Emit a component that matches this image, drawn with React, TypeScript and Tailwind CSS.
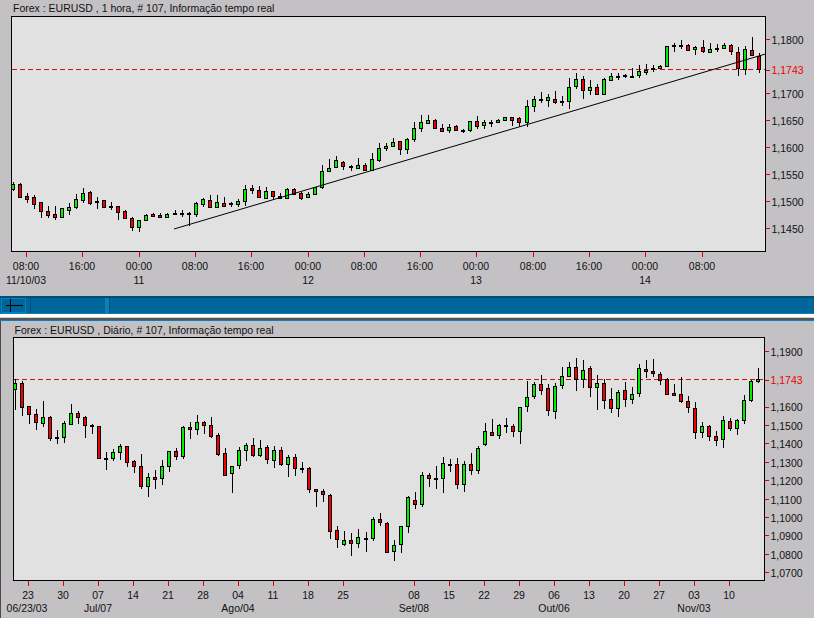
import React from "react";

type C = [number, number, number, number, number];

// hi, bodyTop, bodyBottom, lo, green flag (values measured at 3x)
const hourly: C[] = [
  [547,553,566,572,1],[550,552,590,593,0],[580,588,596,608,0],[586,592,611,626,0],[606,607,632,653,0],[618,634,644,653,0],[618,643,650,659,0],[624,625,650,653,1],[610,622,629,644,1],[583,598,620,626,1],
  [564,580,599,608,1],[574,577,608,614,0],[591,603,607,626,0],[600,601,620,623,0],[607,618,620,629,0],[618,619,635,659,0],[631,634,655,656,0],[652,655,682,692,0],[660,661,682,695,1],[643,646,661,664,1],
  [640,643,647,648,0],[640,644,650,653,0],[640,641,650,653,1],[630,639,641,644,0],[630,640,643,650,0],[637,640,643,677,0],[607,610,643,650,1],[595,598,613,620,1],[586,601,620,625,0],[586,607,620,623,1],
  [590,610,617,618,0],[607,610,613,620,0],[598,604,611,620,1],[556,568,604,617,1],[555,565,571,581,0],[559,571,592,593,0],[562,574,595,598,1],[573,574,587,600,0],[580,587,593,598,0],[565,568,593,598,1],
  [565,566,581,586,0],[576,580,593,599,0],[575,583,590,593,1],[560,562,583,586,1],[495,514,562,566,1],[477,503,512,515,1],[468,481,502,503,1],[484,485,499,509,0],[495,499,502,512,0],[474,496,503,506,1],
  [490,496,509,512,0],[460,478,509,512,1],[430,445,481,485,1],[430,439,445,452,1],[414,427,439,442,1],[424,424,448,464,0],[415,418,448,461,1],[367,385,418,425,1],[345,367,385,395,1],[346,361,370,372,1],
  [358,361,385,388,0],[373,385,392,395,0],[373,381,391,398,1],[376,379,389,392,0],[388,391,394,398,0],[364,364,391,395,1],[348,364,379,388,0],[360,367,376,386,1],[361,365,367,380,0],[358,361,367,368,1],
  [352,352,361,362,1],[351,352,359,377,0],[351,355,367,380,0],[300,319,367,380,1],[289,298,319,335,1],[277,297,301,310,0],[283,292,301,320,1],[273,296,307,311,0],[289,304,307,317,0],[235,260,304,326,1],
  [220,236,259,268,1],[229,236,271,296,0],[240,262,271,284,1],[253,262,283,285,0],[235,238,283,284,1],[220,229,241,243,1],[220,229,232,241,0],[222,226,229,235,0],[205,227,229,230,0],[195,214,226,235,1],
  [192,210,217,226,1],[196,205,207,217,0],[196,199,205,206,1],[139,139,199,199,1],[130,136,139,157,0],[121,136,139,148,0],[133,136,151,152,0],[139,140,148,164,1],[121,142,154,160,0],[130,146,157,160,1],
  [133,145,147,157,0],[130,136,145,148,1],[133,136,154,166,0],[140,155,205,227,0],[139,148,207,224,1],[111,151,166,168,0],[160,167,208,218,0],
];

const daily: C[] = [
  [298,310,328,390,1],[304,310,380,408,0],[377,379,403,432,0],[388,403,427,450,0],[364,412,428,441,1],[409,412,475,483,0],[450,472,475,492,0],[424,430,472,489,1],[373,400,431,435,1],[393,400,412,432,0],
  [409,411,436,474,0],[433,436,439,462,0],[438,439,535,536,0],[517,534,536,570,0],[508,517,535,543,1],[492,499,517,541,1],[497,498,547,560,0],[541,544,559,579,0],[522,559,617,626,0],[578,592,617,651,1],
  [571,592,598,627,0],[541,559,595,615,1],[512,514,559,576,1],[505,514,529,540,0],[439,441,529,536,1],[427,442,448,476,0],[406,427,448,465,1],[424,427,436,462,0],[412,436,467,473,0],[460,466,521,527,0],
  [505,520,584,587,0],[558,559,580,638,1],[502,511,556,567,1],[490,496,511,543,1],[475,496,526,530,0],[480,505,526,532,1],[496,502,538,552,0],[498,511,541,564,1],[502,511,553,557,0],[526,532,553,591,1],
  [522,532,565,588,0],[546,565,567,579,0],[561,565,628,640,0],[627,628,634,681,0],[628,634,643,666,0],[643,646,754,777,0],[739,751,778,804,0],[754,781,793,798,1],[760,781,790,828,0],[748,772,790,804,1],
  [757,774,776,816,0],[712,718,775,782,1],[700,718,727,738,0],[727,728,817,818,0],[781,796,814,843,1],[739,739,793,819,1],[649,652,739,758,1],[637,661,673,687,0],[577,586,673,681,1],[580,586,595,621,0],
  [559,594,596,627,0],[532,550,595,639,1],[538,552,554,576,0],[535,553,613,627,0],[544,553,613,636,1],[520,553,571,585,0],[499,505,571,582,1],[430,454,493,497,1],[418,457,466,469,0],[433,436,466,477,1],
  [415,436,439,459,0],[433,439,454,471,0],[380,380,454,492,1],[304,350,379,396,1],[307,313,349,357,1],[285,313,329,345,0],[312,325,391,407,0],[309,319,394,416,1],[262,289,316,326,1],[247,262,289,290,1],
  [235,262,298,332,0],[241,271,298,323,1],[259,265,322,350,0],[286,310,322,389,1],[298,310,361,386,0],[325,358,385,398,0],[331,337,385,410,1],[307,331,358,380,0],[322,343,358,372,1],[253,265,340,350,1],
  [240,268,274,293,0],[238,274,280,290,0],[277,283,300,314,0],[295,298,341,346,0],[313,340,346,347,0],[292,343,364,368,0],[349,364,382,398,0],[367,385,457,476,0],[427,439,457,473,1],[436,439,469,482,0],
  [454,469,481,497,0],[409,421,478,503,1],[415,424,445,452,0],[418,421,445,465,1],[346,361,421,431,1],[301,304,361,365,1],[265,298,304,308,1],
];

type Tick = { x: number; label: string };
type YT = { y: number; label: string; red?: boolean };

type ChartProps = {
  id: string;
  top: number;
  height: number;
  box: { l: number; t: number; r: number; b: number };
  data: C[];
  x0: number;
  step: number;
  yOff: number;
  dashY: number;
  ticks: Tick[];
  subs: Tick[];
  yTicks: YT[];
  labelX: number;
  row1: number;
  row2: number;
  trend?: [number, number, number, number];
};

function Chart({ id, top, height, box, data, x0, step, yOff, dashY, ticks, subs, yTicks, labelX, row1, row2, trend }: ChartProps) {
  return (
    <svg
      width={814}
      height={height}
      viewBox={`0 ${top} 814 ${height}`}
      className="block text-[10.5px] font-['Liberation_Sans',Arial,sans-serif]"
    >
      <clipPath id={id}>
        <rect x={box.l} y={box.t} width={box.r - box.l} height={box.b - box.t} />
      </clipPath>
      <rect x={box.l} y={box.t} width={box.r - box.l} height={box.b - box.t} fill="#e1e1e1" />
      <g clipPath={`url(#${id})`} shapeRendering="crispEdges">
        <line x1={box.l} x2={box.r} y1={dashY + 0.5} y2={dashY + 0.5} stroke="#cc1111" strokeDasharray="5 3" />
        {data.map((c, i) => {
          const X = Math.round(x0 + step * i);
          const hi = Math.round(c[0] / 3) + yOff;
          const t = Math.round(c[1] / 3) + yOff;
          const bRaw = Math.round(c[2] / 3) + yOff;
          const b = Math.max(bRaw, t + 1);
          const lo = Math.round(c[3] / 3) + yOff;
          const h = b - t;
          return (
            <g key={i}>
              <rect x={X} y={hi} width={1} height={Math.max(lo - hi, 1)} fill="#000" />
              <rect x={X - 2} y={t} width={4} height={h + 1} fill="#000" />
              {h >= 2 && <rect x={X - 1} y={t + 1} width={2} height={h - 1} fill={c[4] ? "#00f000" : "#f00000"} />}
            </g>
          );
        })}
      </g>
      {trend && <line x1={trend[0]} y1={trend[1]} x2={trend[2]} y2={trend[3]} stroke="#000" strokeWidth={1} />}
      <rect x={box.l - 0.5} y={box.t - 0.5} width={box.r - box.l + 1} height={box.b - box.t + 1} fill="none" stroke="#000" shapeRendering="crispEdges" />
      <g shapeRendering="crispEdges">
        {ticks.map((t) => (
          <line key={t.x} x1={t.x + 0.5} x2={t.x + 0.5} y1={box.b + 1} y2={box.b + 6} stroke="#e00000" />
        ))}
        {yTicks.map((t) => (
          <line key={t.label} x1={box.r + 1} x2={box.r + 5} y1={Math.floor(t.y) + 0.5} y2={Math.floor(t.y) + 0.5} stroke="#e00000" />
        ))}
      </g>
      {ticks.map((t) => (
        <text key={t.x} x={t.x} y={row1} textAnchor="middle" fill="#111">
          {t.label}
        </text>
      ))}
      {subs.map((t) => (
        <text key={t.x} x={t.x} y={row2} textAnchor="middle" fill="#111">
          {t.label}
        </text>
      ))}
      {yTicks.map((t) => (
        <text key={t.label} x={labelX} y={t.y + 4} fill={t.red ? "#f00000" : "#111"}>
          {t.label}
        </text>
      ))}
    </svg>
  );
}

const hTicks: Tick[] = [
  [26, "08:00"],[82, "16:00"],[139, "00:00"],[195, "08:00"],[251, "16:00"],[308, "00:00"],[364, "08:00"],[420, "16:00"],[476, "00:00"],[533, "08:00"],[589, "16:00"],[645, "00:00"],[702, "08:00"],
].map(([x, label]) => ({ x: x as number, label: label as string }));

const dTicks: Tick[] = [
  [28, "23"],[63, "30"],[98, "07"],[133, "14"],[168, "21"],[203, "28"],[238, "04"],[273, "11"],[308, "18"],[343, "25"],[414, "08"],[449, "15"],[484, "22"],[519, "29"],[554, "06"],[589, "13"],[624, "20"],[659, "27"],[694, "03"],[729, "10"],
].map(([x, label]) => ({ x: x as number, label: label as string }));

export default function App() {
  return (
    <div className="w-[814px] h-[618px] overflow-hidden bg-[#c4c1c4] flex flex-col font-['Liberation_Sans',Arial,sans-serif] text-[#111]">
      <section className="h-[296px]">
        <div className="h-[16px] pl-[13px] text-[10.5px] leading-[16px]">Forex : EURUSD , 1 hora, # 107, Informação tempo real</div>
        <Chart
          id="hourly"
          top={16}
          height={280}
          box={{ l: 12, t: 17, r: 765, b: 251 }}
          data={hourly}
          x0={12.6}
          step={7.04}
          yOff={0}
          dashY={69}
          ticks={hTicks}
          subs={[
            { x: 26, label: "11/10/03" },
            { x: 139, label: "11" },
            { x: 308, label: "12" },
            { x: 476, label: "13" },
            { x: 645, label: "14" },
          ]}
          yTicks={[
            { y: 39.5, label: "1,1800" },
            { y: 70, label: "1,1743", red: true },
            { y: 93.5, label: "1,1700" },
            { y: 120.5, label: "1,1650" },
            { y: 147.5, label: "1,1600" },
            { y: 174.5, label: "1,1550" },
            { y: 201.5, label: "1,1500" },
            { y: 228.5, label: "1,1450" },
          ]}
          labelX={771.5}
          row1={270}
          row2={283.5}
          trend={[174, 229, 765.5, 54]}
        />
      </section>

      <div className="h-[18px] flex bg-[#006699] border-t-2 border-b border-t-[#004f78] border-b-[#0a80c0]">
        <div className="w-[25px] ml-px flex items-center justify-center border border-[#0a80c0]">
          <svg width="23" height="13" viewBox="0 0 23 13">
            <path d="M4 6.5H21M8.5 0V13" stroke="#000" strokeWidth="1" fill="none" />
          </svg>
        </div>
        <div className="w-[4px]" />
        <div className="w-[75px] border-l border-[#004f78]" />
        <div className="w-[5px] bg-[#0a80c0] border-r border-[#004f78]" />
      </div>
      <div className="h-[3px] bg-white" />
      <div className="h-px bg-[#d0d0d0]" />
      <div className="h-[2px] bg-[#555555]" />
      <div className="h-px bg-[#0a80c0]" />

      <section className="flex-1 relative">
        <div className="h-[16px] pl-[14.5px] text-[10.5px] leading-[18px]">Forex : EURUSD , Diário, # 107, Informação tempo real</div>
        <Chart
          id="daily"
          top={337}
          height={281}
          box={{ l: 14, t: 338, r: 764, b: 580 }}
          data={daily}
          x0={15}
          step={7.01}
          yOff={280}
          dashY={379}
          ticks={dTicks}
          subs={[
            { x: 27, label: "06/23/03" },
            { x: 98, label: "Jul/07" },
            { x: 238, label: "Ago/04" },
            { x: 414, label: "Set/08" },
            { x: 554, label: "Out/06" },
            { x: 694, label: "Nov/03" },
          ]}
          yTicks={[
            { y: 351.5, label: "1,1900" },
            { y: 380, label: "1,1743", red: true },
            { y: 407, label: "1,1600" },
            { y: 425.5, label: "1,1500" },
            { y: 443.5, label: "1,1400" },
            { y: 462.5, label: "1,1300" },
            { y: 480.5, label: "1,1200" },
            { y: 499.5, label: "1,1100" },
            { y: 517.5, label: "1,1000" },
            { y: 535.5, label: "1,0900" },
            { y: 554.5, label: "1,0800" },
            { y: 572.5, label: "1,0700" },
          ]}
          labelX={770.5}
          row1={599}
          row2={612}
        />
        <div className="absolute left-0 top-0 bottom-0 w-px bg-[#4a4a4a]" />
      </section>
    </div>
  );
}
